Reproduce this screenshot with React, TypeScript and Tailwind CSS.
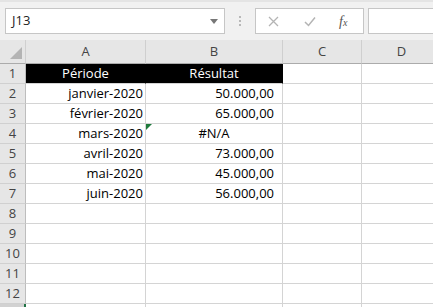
import React from "react";

const font = { fontFamily: '"Open Sans", "Liberation Sans", sans-serif' };

type Row = { a?: string; b?: string; bCenter?: boolean; flag?: boolean };

const rows: Row[] = [
  { a: "janvier-2020", b: "50.000,00" },
  { a: "février-2020", b: "65.000,00" },
  { a: "mars-2020", b: "#N/A", bCenter: true, flag: true },
  { a: "avril-2020", b: "73.000,00" },
  { a: "mai-2020", b: "45.000,00" },
  { a: "juin-2020", b: "56.000,00" },
  {},
  {},
  {},
  {},
  {},
];

function RowHeader({ n, selected }: { n?: number; selected?: boolean }) {
  return (
    <div
      className={
        "h-[20px] flex items-center justify-center border-b text-[13px] " +
        (selected
          ? "bg-[#d2d2d2] border-r-2 border-r-[#217346] border-b-[#9e9e9e] text-[#217346]"
          : "bg-[#e6e6e6] border-r border-r-[#bdbdbd] border-b-[#d0d0d0] text-[#444]")
      }
    >
      {n}
    </div>
  );
}

export default function App() {
  return (
    <div className="w-[433px] h-[307px] overflow-hidden bg-white" style={font}>
      {/* toolbar */}
      <div className="h-[40px] bg-[#f1f1f1] border-t-2 border-t-[#e4e4e4] flex items-start pt-[6px] pl-[5px]">
        <div className="w-[220px] h-[26px] shrink-0 bg-white border border-[#c6c6c6] flex items-center justify-between pl-[6px] pr-[6px]">
          <span className="text-[13px] text-[#222]">J13</span>
          <svg width="8" height="5" viewBox="0 0 8 5">
            <path d="M0 0 L8 0 L4 5 Z" fill="#777" />
          </svg>
        </div>
        <div className="w-[30px] h-[26px] shrink-0 flex flex-col items-center justify-center gap-[2px]">
          <div className="w-[2px] h-[2px] bg-[#b8b8b8]" />
          <div className="w-[2px] h-[2px] bg-[#b8b8b8]" />
          <div className="w-[2px] h-[2px] bg-[#b8b8b8]" />
        </div>
        <div className="w-[109px] h-[26px] shrink-0 bg-white border border-[#c6c6c6] relative">
          <svg className="absolute left-[12px] top-[7px]" width="11" height="11" viewBox="0 0 11 11">
            <path d="M1 1 L10 10 M10 1 L1 10" stroke="#b4b4b4" strokeWidth="1.3" />
          </svg>
          <svg className="absolute left-[48px] top-[7px]" width="12" height="11" viewBox="0 0 12 11">
            <path d="M1 6 L4.5 9.5 L11 1.5" stroke="#b4b4b4" strokeWidth="1.5" fill="none" />
          </svg>
          <span
            className="absolute left-[83px] top-[2px] text-[14px] italic text-[#555]"
            style={{ fontFamily: '"Liberation Serif", serif' }}
          >
            f<span className="text-[10px]">x</span>
          </span>
        </div>
        <div className="w-[80px] h-[26px] shrink-0 ml-[4px] bg-white border border-[#c6c6c6]" />
      </div>

      {/* grid */}
      <div className="grid grid-cols-[26px_120px_137px_79px_80px]">
        {/* header row */}
        <div className="h-[24px] bg-[#e6e6e6] border-r border-r-[#d0d0d0] border-b border-b-[#ababab] flex items-end justify-end pr-[3px] pb-[4px]">
          <svg width="12" height="12" viewBox="0 0 12 12">
            <path d="M12 0 L12 12 L0 12 Z" fill="#b4b4b4" />
          </svg>
        </div>
        {["A", "B", "C", "D"].map((c) => (
          <div
            key={c}
            className="h-[24px] bg-[#e6e6e6] border-r border-r-[#cfcfcf] border-b border-b-[#ababab] flex items-center justify-center text-[13px] text-[#444]"
          >
            {c}
          </div>
        ))}

        {/* row 1 */}
        <RowHeader n={1} />
        <div className="h-[20px] bg-black border-r border-r-black border-b border-b-[#d4d4d4] flex items-center justify-center text-[13px] text-white">
          Période
        </div>
        <div className="h-[20px] bg-black border-r border-r-black border-b border-b-[#d4d4d4] flex items-center justify-center text-[13px] text-white">
          Résultat
        </div>
        <div className="h-[20px] border-r border-b border-[#d4d4d4]" />
        <div className="h-[20px] border-r border-b border-[#d4d4d4]" />

        {rows.map((r, i) => (
          <React.Fragment key={i}>
            <RowHeader n={i + 2} />
            <div className="h-[20px] border-r border-b border-[#d4d4d4] flex items-center justify-end pr-[2px] text-[13px] text-black">
              {r.a}
            </div>
            <div
              className={
                "relative h-[20px] border-r border-b border-[#d4d4d4] flex items-center text-[13px] text-black " +
                (r.bCenter ? "justify-center" : "justify-end pr-[8px]")
              }
            >
              {r.flag && (
                <svg className="absolute left-0 top-0" width="6" height="6" viewBox="0 0 6 6">
                  <path d="M0 0 L6 0 L0 6 Z" fill="#1e7a3c" />
                </svg>
              )}
              {r.b}
            </div>
            <div className="h-[20px] border-r border-b border-[#d4d4d4]" />
            <div className="h-[20px] border-r border-b border-[#d4d4d4]" />
          </React.Fragment>
        ))}

        {/* row 13 (selected, mostly out of view) */}
        <RowHeader selected />
        <div className="h-[20px] border-r border-b border-[#d4d4d4]" />
        <div className="h-[20px] border-r border-b border-[#d4d4d4]" />
        <div className="h-[20px] border-r border-b border-[#d4d4d4]" />
        <div className="h-[20px] border-r border-b border-[#d4d4d4]" />
      </div>
    </div>
  );
}
